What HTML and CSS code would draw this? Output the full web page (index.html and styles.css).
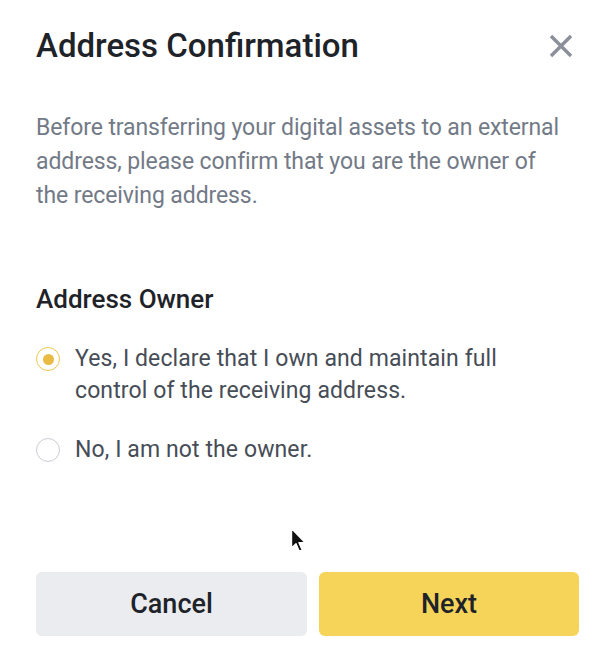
FILE: index.html
```html
<!DOCTYPE html>
<html lang="en">
<head>
    <meta charset="UTF-8">
    <title>Address Confirmation</title>
    <link rel="stylesheet" href="styles.css">
</head>
<body>
    <div class="modal">
        <div class="modal-header">
            <h1>Address Confirmation</h1>
            <button class="close-btn" aria-label="Close">
                <svg width="24" height="24" viewBox="0 0 24 24">
                    <path d="M2 2 L22 22 M22 2 L2 22" stroke="#8a8f99" stroke-width="3.4" fill="none"/>
                </svg>
            </button>
        </div>

        <p class="intro">Before transferring your digital assets to an external address, please confirm that you are the owner of the receiving address.</p>

        <h2>Address Owner</h2>

        <div class="options">
            <label class="option">
                <span class="radio checked"></span>
                <span class="option-text">Yes, I declare that I own and maintain full control of the receiving address.</span>
            </label>
            <label class="option">
                <span class="radio"></span>
                <span class="option-text">No, I am not the owner.</span>
            </label>
        </div>

        <div class="actions">
            <button class="btn btn-cancel">Cancel</button>
            <button class="btn btn-next">Next</button>
        </div>
    </div>

    <!-- mouse pointer from the screenshot -->
    <svg class="cursor" width="18" height="28" viewBox="0 0 18 28">
        <path d="M1.5 1.5 L1.5 21 L6 16.8 L9.2 24.2 L12.2 22.9 L9 15.6 L15 15.6 Z" fill="#111" stroke="#fff" stroke-width="1.4" stroke-linejoin="round"/>
    </svg>
</body>
</html>
```

FILE: styles.css
```css
/* Basic styling */
body { margin: 0; background: #fff; font-family: "Roboto", "Inter", sans-serif; color: #1e2329; }
.modal { position: relative; width: 616px; height: 664px; box-sizing: border-box; padding: 26px 38px 0 36px; }
.modal-header { display: flex; justify-content: space-between; align-items: center; height: 40px; }
.modal-header h1 { margin: 0; font-size: 33px; font-weight: 500; line-height: 40px; }
.close-btn { border: 0; background: none; padding: 0; width: 24px; height: 24px; margin-right: 5px; cursor: pointer; }
.intro { margin: 45px 0 0; max-width: 530px; font-size: 23px; line-height: 34px; letter-spacing: -0.1px; color: #737a87; }
h2 { margin: 71px 0 0; font-size: 26px; font-weight: 500; line-height: 30px; }
.options { margin-top: 29px; display: flex; flex-direction: column; gap: 27px; }
.option { display: flex; align-items: flex-start; gap: 15px; font-size: 23px; line-height: 32px; letter-spacing: 0.1px; color: #474d57; }
.option-text { max-width: 470px; }
.radio { flex: none; width: 24px; height: 24px; margin-top: 4px; border: 1.5px solid #c8ccd2; border-radius: 50%; box-sizing: border-box; display: flex; align-items: center; justify-content: center; }
.radio.checked { border-color: #f0c64a; }
.radio.checked::after { content: ""; width: 11px; height: 11px; border-radius: 50%; background: #e9bb45; }
.actions { position: absolute; left: 36px; top: 572px; display: grid; grid-template-columns: 271px 260px; gap: 12px; }
.btn { height: 64px; border: 0; border-radius: 6px; font-family: inherit; font-size: 27px; font-weight: 500; color: #1e2329; }
.btn-cancel { background: #eaecef; }
.btn-next { background: #f6d45a; }
.cursor { position: absolute; left: 290px; top: 527px; }
```
